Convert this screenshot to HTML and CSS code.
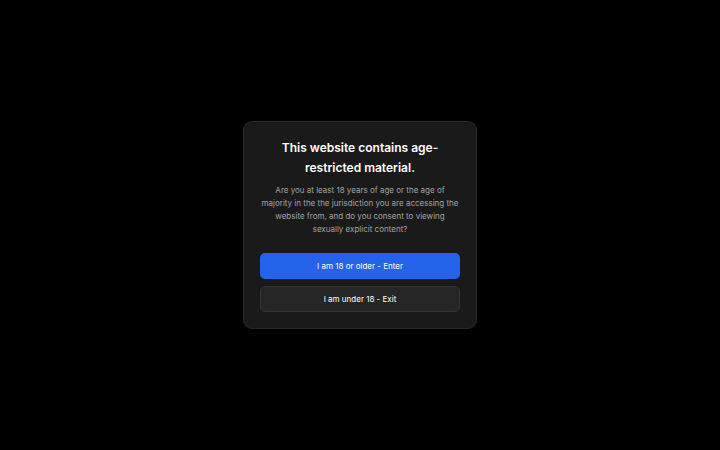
FILE: index.html
```html
<!DOCTYPE html>
<html lang="en">
<head>
<meta charset="utf-8">
<link rel="stylesheet" href="styles.css">
</head>
<body>
<div class="overlay">
  <div class="card">
    <h1 class="title">This website contains age-restricted material.</h1>
    <p class="text">Are you at least 18 years of age or the age of majority in the the jurisdiction you are accessing the website from, and do you consent to viewing sexually explicit content?</p>
    <div class="actions">
      <button class="btn btn-primary">I am 18 or older - Enter</button>
      <button class="btn btn-secondary">I am under 18 - Exit</button>
    </div>
  </div>
</div>
</body>
</html>
```
FILE: styles.css
```css
html, body {
  margin: 0;
  padding: 0;
  height: 100%;
  background: #000;
}
body {
  font-family: Inter, "Noto Sans", sans-serif;
}
.overlay {
  height: 100%;
  display: flex;
  align-items: center;
  justify-content: center;
}
.card {
  width: 200px;
  padding: 16px;
  background: #1a1a1a;
  border: 1px solid #2a2a2a;
  border-radius: 9px;
  text-align: center;
}
.title {
  margin: 0;
  font-size: 12px;
  line-height: 20px;
  font-weight: 600;
  color: #fff;
}
.text {
  margin: 6px 0 0;
  font-size: 8px;
  line-height: 13px;
  color: #a3a3a3;
}
.actions {
  margin-top: 17px;
  display: flex;
  flex-direction: column;
  gap: 7px;
}
.btn {
  height: 26px;
  border-radius: 5px;
  font-family: inherit;
  font-size: 8px;
  color: #fff;
  cursor: pointer;
  padding: 0;
}
.btn-primary {
  background: #2563eb;
  border: none;
}
.btn-secondary {
  background: #262626;
  border: 1px solid #333;
}
```
